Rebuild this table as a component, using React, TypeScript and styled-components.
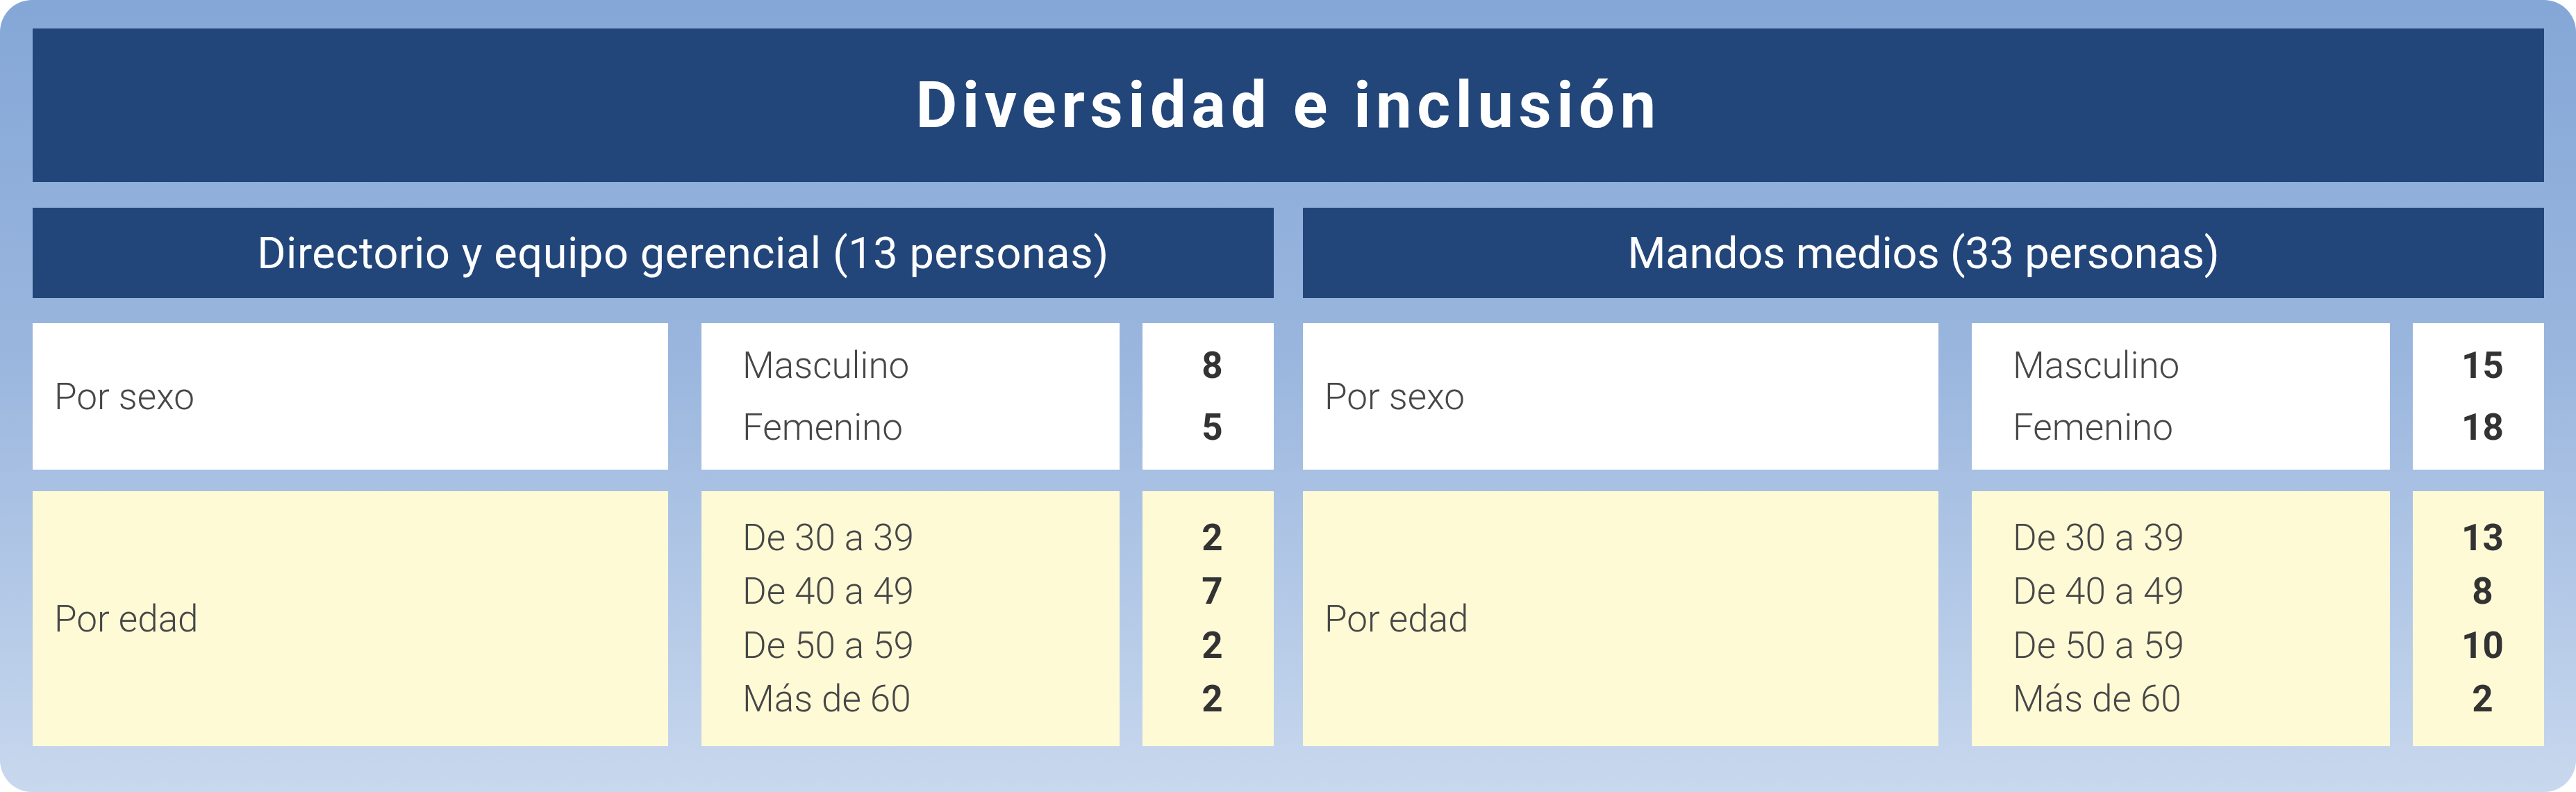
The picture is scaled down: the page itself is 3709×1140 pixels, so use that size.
import React from 'react';
import styled, { createGlobalStyle } from 'styled-components';

const GlobalStyle = createGlobalStyle`
  html, body {
    margin: 0;
    padding: 0;
    background: #ffffff;
  }
  body {
    font-family: Roboto, "Open Sans", "Liberation Sans", sans-serif;
  }
`;

const Panel = styled.div`
  width: 3709px;
  height: 1140px;
  box-sizing: border-box;
  padding: 41px 46px 66px 47px;
  border-radius: 46px;
  background: linear-gradient(180deg, #84a7d7 0%, #9ab6de 45%, #c8d8ee 100%);
  display: flex;
  flex-direction: column;
`;

const TitleBar = styled.div`
  height: 221px;
  margin-bottom: 37px;
  background: #22467a;
  display: flex;
  align-items: center;
  justify-content: center;
  color: #ffffff;
  font-size: 92px;
  font-weight: 700;
  letter-spacing: 7.5px;
`;

const Blocks = styled.div`
  display: grid;
  grid-template-columns: 1787px 1787px;
  column-gap: 42px;
`;

const Block = styled.section`
  display: flex;
  flex-direction: column;
`;

const BlockHeader = styled.div<{ $shift?: number; $spacing?: number }>`
  height: 130px;
  margin-bottom: 36px;
  box-sizing: border-box;
  padding-left: ${(p) => (p.$shift ? p.$shift * 2 : 0)}px;
  background: #22467a;
  color: #ffffff;
  display: flex;
  align-items: center;
  justify-content: center;
  font-size: 63px;
  font-weight: 400;
  letter-spacing: ${(p) => p.$spacing ?? 0}px;
`;

/* tracks include the gutters: label 915 + 48, items 602 + 33, counts 189 */
const Row = styled.div<{ $height: number; $tint: string }>`
  display: grid;
  grid-template-columns: 963px 635px 189px;
  height: ${(p) => p.$height}px;
  margin-bottom: 31px;
  &:last-child {
    margin-bottom: 0;
  }

  & > div {
    background: ${(p) => p.$tint};
  }
`;

const LabelCell = styled.div`
  display: flex;
  align-items: center;
  padding-left: 31px;
  margin-right: 48px;
  color: #474747;
  font-size: 53px;
  font-weight: 300;
`;

const ItemsCell = styled.div<{ $line: number }>`
  display: flex;
  flex-direction: column;
  justify-content: center;
  padding-left: 59px;
  margin-right: 33px;
  color: #474747;
  font-size: 53px;
  font-weight: 300;
  line-height: ${(p) => p.$line}px;
`;

const CountCell = styled.div<{ $line: number }>`
  display: flex;
  flex-direction: column;
  justify-content: center;
  align-items: center;
  padding-left: 12px;
  color: #333333;
  font-size: 53px;
  font-weight: 700;
  line-height: ${(p) => p.$line}px;
`;

type Group = { label: string; items: [string, number][]; tint: string; height: number; line: number };

const blocks: { title: string; shift?: number; spacing?: number; groups: Group[] }[] = [
  {
    title: 'Directorio y equipo gerencial (13 personas)',
    shift: 43,
    spacing: 0.6,
    groups: [
      { label: 'Por sexo', tint: '#ffffff', height: 211, line: 89, items: [['Masculino', 8], ['Femenino', 5]] },
      {
        label: 'Por edad',
        tint: '#fffad6',
        height: 367,
        line: 77.5,
        items: [['De 30 a 39', 2], ['De 40 a 49', 7], ['De 50 a 59', 2], ['Más de 60', 2]],
      },
    ],
  },
  {
    title: 'Mandos medios (33 personas)',
    spacing: -0.2,
    groups: [
      { label: 'Por sexo', tint: '#ffffff', height: 211, line: 89, items: [['Masculino', 15], ['Femenino', 18]] },
      {
        label: 'Por edad',
        tint: '#fffad6',
        height: 367,
        line: 77.5,
        items: [['De 30 a 39', 13], ['De 40 a 49', 8], ['De 50 a 59', 10], ['Más de 60', 2]],
      },
    ],
  },
];

const App: React.FC = () => {
  return (
    <>
      <GlobalStyle />
      <Panel>
        <TitleBar>Diversidad e inclusión</TitleBar>
        <Blocks>
          {blocks.map((block) => (
            <Block key={block.title}>
              <BlockHeader $shift={block.shift} $spacing={block.spacing}>
                {block.title}
              </BlockHeader>
              {block.groups.map((g) => (
                <Row key={g.label} $height={g.height} $tint={g.tint}>
                  <LabelCell>{g.label}</LabelCell>
                  <ItemsCell $line={g.line}>
                    {g.items.map(([name]) => (
                      <span key={name}>{name}</span>
                    ))}
                  </ItemsCell>
                  <CountCell $line={g.line}>
                    {g.items.map(([name, count]) => (
                      <span key={name}>{count}</span>
                    ))}
                  </CountCell>
                </Row>
              ))}
            </Block>
          ))}
        </Blocks>
      </Panel>
    </>
  );
};

export default App;
